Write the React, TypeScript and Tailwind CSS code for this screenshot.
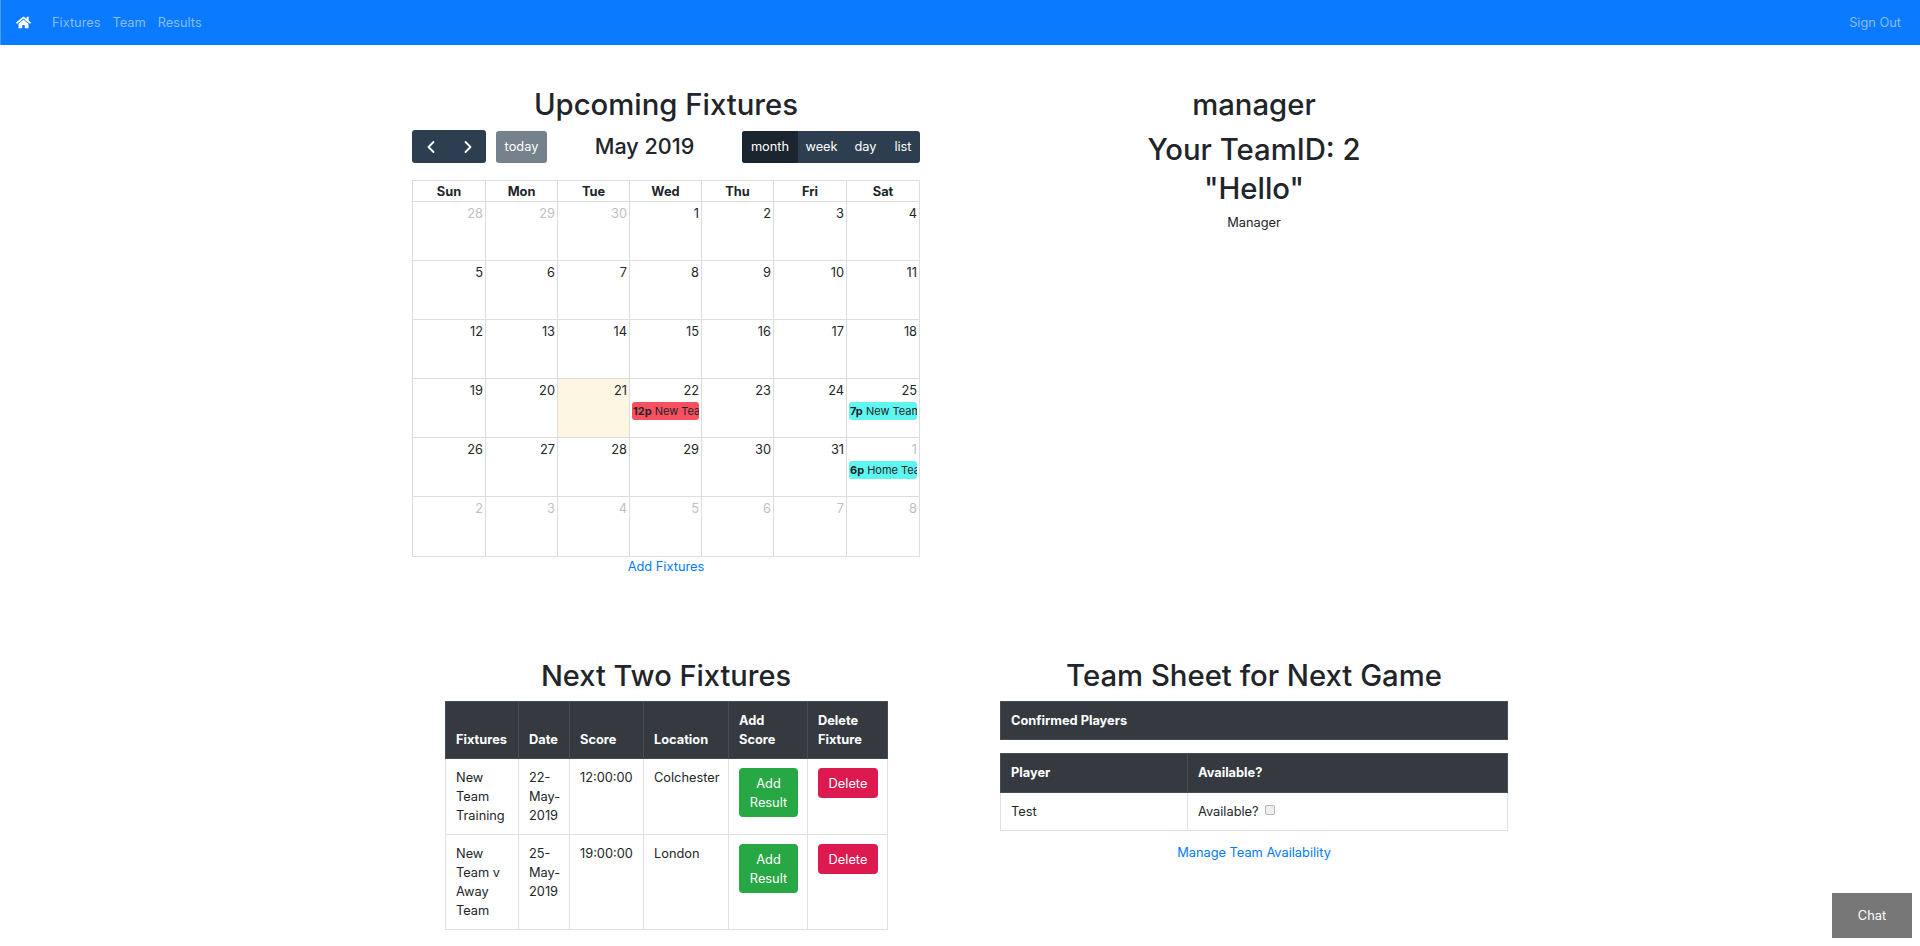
import { FaHome } from "react-icons/fa";
import { ChevronLeft, ChevronRight } from "lucide-react";

type CalEvent = { time: string; title: string; color: string };
type Day = { n: number; muted?: boolean; today?: boolean; event?: CalEvent };

const d = (n: number, extra: Partial<Day> = {}): Day => ({ n, ...extra });

const weeks: Day[][] = [
  [d(28, { muted: true }), d(29, { muted: true }), d(30, { muted: true }), d(1), d(2), d(3), d(4)],
  [d(5), d(6), d(7), d(8), d(9), d(10), d(11)],
  [d(12), d(13), d(14), d(15), d(16), d(17), d(18)],
  [
    d(19),
    d(20),
    d(21, { today: true }),
    d(22, { event: { time: "12p", title: "New Team Training", color: "bg-[#f9505f]" } }),
    d(23),
    d(24),
    d(25, { event: { time: "7p", title: "New Team v Away Team", color: "bg-[#5ef6f1]" } }),
  ],
  [
    d(26),
    d(27),
    d(28),
    d(29),
    d(30),
    d(31),
    d(1, { muted: true, event: { time: "6p", title: "Home Team v Away Team", color: "bg-[#5ef6f1]" } }),
  ],
  [2, 3, 4, 5, 6, 7, 8].map((n) => d(n, { muted: true })),
];

const dayNames = ["Sun", "Mon", "Tue", "Wed", "Thu", "Fri", "Sat"];

const fixtures = [
  { name: "New Team Training", date: "22-May-2019", score: "12:00:00", location: "Colchester" },
  { name: "New Team v Away Team", date: "25-May-2019", score: "19:00:00", location: "London" },
];

function Calendar() {
  return (
    <div>
      <div className="mb-[17px] flex items-center justify-between">
        <div className="flex gap-[10px]">
          <div className="flex h-[33px] w-[74px] items-center rounded-[3px] bg-[#2c3e50] text-white">
            <span className="flex flex-1 justify-center">
              <ChevronLeft size={20} strokeWidth={2.2} />
            </span>
            <span className="flex flex-1 justify-center">
              <ChevronRight size={20} strokeWidth={2.2} />
            </span>
          </div>
          <button className="h-[32px] w-[51px] self-end rounded-[3px] bg-[#76818e] text-white">today</button>
        </div>
        <h2 className="text-[21.6px] leading-[27px] font-medium text-[#212529]">May 2019</h2>
        <div className="flex h-[32px] overflow-hidden rounded-[3px] bg-[#2c3e50] text-white">
          <span className="flex w-[56px] items-center justify-center bg-[#1a252f]">month</span>
          <span className="flex w-[47px] items-center justify-center">week</span>
          <span className="flex w-[41px] items-center justify-center">day</span>
          <span className="flex w-[34px] items-center justify-center">list</span>
        </div>
      </div>
      <table className="w-[507px] table-fixed border-collapse">
        <colgroup>
          <col className="w-[73px]" />
          <col className="w-[72px]" />
          <col className="w-[72px]" />
          <col className="w-[72px]" />
          <col className="w-[72px]" />
          <col className="w-[73px]" />
          <col className="w-[73px]" />
        </colgroup>
        <thead>
          <tr>
            {dayNames.map((name) => (
              <th key={name} className="h-[21px] border border-[#ddd] p-0 text-center leading-[19px] font-bold text-[#212529]">
                {name}
              </th>
            ))}
          </tr>
        </thead>
        <tbody>
          {weeks.map((week, i) => (
            <tr key={i}>
              {week.map((day, j) => (
                <td
                  key={j}
                  className={`${i === 5 ? "h-[60px]" : "h-[59px]"} border border-[#ddd] p-0 align-top ${day.today ? "bg-[#fcf6e3]" : ""}`}
                >
                  <div className={`pt-[2px] pr-[2px] text-right leading-[19px] ${day.muted ? "text-[#bfbfbf]" : "text-[#212529]"}`}>
                    {day.n}
                  </div>
                  {day.event && (
                    <div
                      className={`mt-[2px] mr-[2px] ml-[2px] h-[18px] overflow-hidden rounded-[3px] pl-[1px] text-[11px] leading-[18px] whitespace-nowrap text-[#212529] ${day.event.color}`}
                    >
                      <b className="font-bold">{day.event.time}</b> {day.event.title}
                    </div>
                  )}
                </td>
              ))}
            </tr>
          ))}
        </tbody>
      </table>
      <p className="text-center leading-[19px] text-[#007bff]">
        <a href="#">Add Fixtures</a>
      </p>
    </div>
  );
}

function FixturesTable() {
  return (
    <table className="ml-[73px] w-[442px] table-fixed border-collapse text-left leading-[19px]">
      <colgroup>
        <col className="w-[73px]" />
        <col className="w-[51px]" />
        <col className="w-[74px]" />
        <col className="w-[85px]" />
        <col className="w-[79px]" />
        <col className="w-[80px]" />
      </colgroup>
      <thead className="bg-[#343a40] text-white">
        <tr>
          {["Fixtures", "Date", "Score", "Location", "Add Score", "Delete Fixture"].map((h) => (
            <th key={h} className="border border-[#454d55] px-[10px] py-[9px] align-bottom font-bold">
              {h}
            </th>
          ))}
        </tr>
      </thead>
      <tbody>
        {fixtures.map((f, i) => (
          <tr key={f.name} className={i === 0 ? "h-[76px]" : "h-[95px]"}>
            <td className="border border-[#dee2e6] px-[10px] pt-[9px] pb-[8px] align-top">{f.name}</td>
            <td className="border border-[#dee2e6] px-[10px] pt-[9px] pb-[8px] align-top">{f.date}</td>
            <td className="border border-[#dee2e6] px-[10px] pt-[9px] pb-[8px] align-top">{f.score}</td>
            <td className="border border-[#dee2e6] px-[10px] pt-[9px] pb-[8px] align-top">{f.location}</td>
            <td className="border border-[#dee2e6] px-[10px] pt-[9px] pb-[8px] align-top">
              <button className="block w-[59px] rounded-[4px] bg-[#28a745] py-[5.5px] text-center text-white">Add Result</button>
            </td>
            <td className="border border-[#dee2e6] px-[10px] pt-[9px] pb-[8px] align-top">
              <button className="block w-[60px] rounded-[4px] bg-[#dc1a4f] py-[5.5px] text-center text-white">Delete</button>
            </td>
          </tr>
        ))}
      </tbody>
    </table>
  );
}

function TeamSheet() {
  return (
    <div>
      <div className="h-[39px] border border-[#454d55] bg-[#343a40] px-[10px] leading-[37px] font-bold text-white">
        Confirmed Players
      </div>
      <table className="mt-[13px] w-full table-fixed border-collapse text-left">
        <colgroup>
          <col className="w-[187px]" />
          <col />
        </colgroup>
        <thead className="bg-[#343a40] text-white">
          <tr>
            <th className="h-[39px] border border-[#454d55] px-[10px] font-bold">Player</th>
            <th className="h-[39px] border border-[#454d55] px-[10px] font-bold">Available?</th>
          </tr>
        </thead>
        <tbody>
          <tr>
            <td className="h-[38px] border border-[#dee2e6] px-[10px]">Test</td>
            <td className="h-[38px] border border-[#dee2e6] px-[10px]">
              Available?
              <input
                type="checkbox"
                className="relative -top-[2px] ml-[6px] size-[10px] appearance-none rounded-[2px] border border-[#b4b4b4] bg-[#efefef] align-middle"
              />
            </td>
          </tr>
        </tbody>
      </table>
      <p className="mt-[12px] text-center leading-[19px] text-[#007bff]">
        <a href="#">Manage Team Availability</a>
      </p>
    </div>
  );
}

export default function App() {
  return (
    <div className="min-h-[946px] bg-white font-['Inter','Liberation_Sans',sans-serif] text-[12.8px] leading-[19.2px] text-[#212529]">
      <nav className="flex h-[45px] items-center justify-between border-l border-[#4b9bff] bg-[#0a7aff] pr-[19px] pl-[15px]">
        <div className="flex items-center">
          <FaHome className="mr-[21px] text-white" size={15} />
          <div className="flex gap-[12px] text-[#8bbdff]">
            <a href="#">Fixtures</a>
            <a href="#">Team</a>
            <a href="#">Results</a>
          </div>
        </div>
        <a href="#" className="text-[#8bbdff]">
          Sign Out
        </a>
      </nav>

      <main className="mx-auto w-[1176px]">
        <div className="grid grid-cols-2 pt-[41px]">
          <section className="px-[40px]">
            <h2 className="mb-[6px] text-center text-[29.3px] leading-[38px] font-medium">Upcoming Fixtures</h2>
            <Calendar />
          </section>
          <section className="px-[40px] text-center">
            <h2 className="mb-[6px] text-[29.3px] leading-[38px] font-medium">manager</h2>
            <h2 className="text-[29.3px] leading-[39px] font-medium">
              Your TeamID: 2
              <br />
              "Hello"
            </h2>
            <p className="mt-[5px]">Manager</p>
          </section>
        </div>
        <div className="grid grid-cols-2 pt-[81px]">
          <section>
            <h2 className="mb-[6px] text-center text-[29px] leading-[38px] font-medium">Next Two Fixtures</h2>
            <FixturesTable />
          </section>
          <section className="px-[40px]">
            <h2 className="mb-[6px] text-center text-[29.3px] leading-[38px] font-medium">Team Sheet for Next Game</h2>
            <TeamSheet />
          </section>
        </div>
      </main>

      <button className="fixed right-[8px] bottom-[8px] h-[45px] w-[80px] bg-[#777] text-white">Chat</button>
    </div>
  );
}
